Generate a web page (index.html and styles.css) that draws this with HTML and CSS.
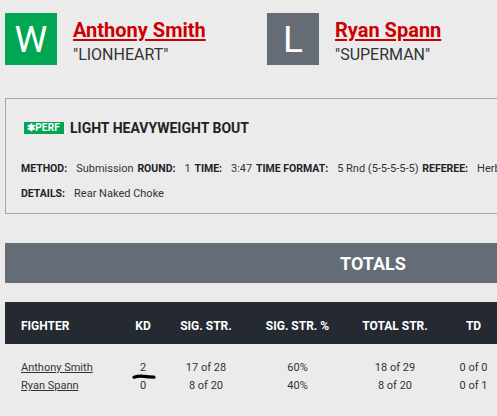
FILE: index.html
```html
<!DOCTYPE html>
<html>
<head>
<meta charset="utf-8">
<link rel="stylesheet" href="styles.css">
</head>
<body>
<div class="page">
  <div class="fighters">
    <div class="fighter">
      <div class="result win">W</div>
      <div class="info">
        <a class="name" href="#">Anthony Smith</a>
        <div class="nick">"LIONHEART"</div>
      </div>
    </div>
    <div class="fighter">
      <div class="result loss">L</div>
      <div class="info">
        <a class="name" href="#">Ryan Spann</a>
        <div class="nick">"SUPERMAN"</div>
      </div>
    </div>
  </div>

  <div class="bout">
    <div class="bout-title"><span class="perf">&#x2731;PERF</span><span class="title">LIGHT HEAVYWEIGHT BOUT</span></div>
    <div class="meta">
      <span class="lbl">METHOD:</span><span class="val">Submission</span>
      <span class="lbl">ROUND:</span><span class="val">1</span>
      <span class="lbl">TIME:</span><span class="val">3:47</span>
      <span class="lbl">TIME FORMAT:</span><span class="val">5 Rnd (5-5-5-5-5)</span>
      <span class="lbl">REFEREE:</span><span class="val">Herb Dean</span>
    </div>
    <div class="meta details">
      <span class="lbl">DETAILS:</span><span class="val">Rear Naked Choke</span>
    </div>
  </div>

  <div class="totals">TOTALS</div>

  <table class="stats">
    <colgroup>
      <col class="c-fighter"><col class="c-kd"><col class="c-sig"><col class="c-pct"><col class="c-tot"><col class="c-td"><col class="c-tdp">
    </colgroup>
    <thead>
      <tr><th class="left">FIGHTER</th><th>KD</th><th>SIG. STR.</th><th>SIG. STR. %</th><th>TOTAL STR.</th><th>TD</th><th>TD %</th></tr>
    </thead>
    <tbody>
      <tr class="first"><td class="left"><a href="#">Anthony Smith</a></td><td class="kd">2<svg class="mark" width="26" height="8" viewBox="0 0 26 8"><path d="M3 4.2 Q8 2.6 13 3.4 T23 4.2" fill="none" stroke="#000" stroke-width="3.2" stroke-linecap="round"/></svg></td><td>17 of 28</td><td>60%</td><td>18 of 29</td><td>0 of 0</td><td>---</td></tr>
      <tr><td class="left"><a href="#">Ryan Spann</a></td><td>0</td><td>8 of 20</td><td>40%</td><td>8 of 20</td><td>0 of 1</td><td>0%</td></tr>
    </tbody>
  </table>
</div>
</body>
</html>
```

FILE: styles.css
```css
html, body {
  margin: 0;
  padding: 0;
  overflow: hidden;
  background: #ebebeb;
}
body {
  font-family: Roboto, "Liberation Sans", sans-serif;
  color: #333;
}
.page {
  width: 736px;
  padding: 13px 0 0 5px;
}
.fighters {
  display: flex;
}
.fighter {
  display: flex;
  width: 262px;
}
.result {
  width: 52px;
  height: 52px;
  display: flex;
  align-items: center;
  justify-content: center;
  color: #fff;
  font-size: 37px;
  line-height: 1;
}
.win { background: #00a651; }
.loss { background: #656c75; }
.info {
  margin-left: 16px;
  padding-top: 4px;
  display: flex;
  flex-direction: column;
}
.name {
  color: #cc0000;
  font-size: 20px;
  font-weight: 700;
  line-height: 26px;
  text-decoration: underline;
  text-decoration-thickness: 2px;
  text-underline-offset: 2px;
}
.nick {
  margin-top: 3px;
  font-size: 16px;
  line-height: 18px;
  color: #333;
}
.bout {
  margin-top: 33px;
  border: 1px solid #a7a7a7;
  border-right: none;
  height: 116px;
  padding-left: 15px;
  box-sizing: border-box;
}
.bout-title {
  display: flex;
  align-items: center;
  margin-top: 22px;
  height: 13px;
}
.perf {
  background: #00a651;
  color: #fff;
  font-size: 10px;
  font-weight: 700;
  line-height: 12px;
  padding: 0 4px 0 3px;
  margin-left: 3px;
  letter-spacing: 0.2px;
}
.title {
  margin-left: 6px;
  font-size: 14px;
  font-weight: 700;
  color: #222;
}
.meta {
  margin-top: 29px;
  font-size: 11px;
  line-height: 12px;
  white-space: nowrap;
}
.meta.details {
  margin-top: 13px;
}
.lbl {
  font-weight: 700;
  font-size: 10.5px;
  color: #222;
  margin-left: 1px;
}
.lbl:first-child {
  margin-left: 0;
}
.val {
  margin-left: 9px;
  color: #333;
}
.totals {
  margin-top: 29px;
  height: 40px;
  background: #646c75;
  color: #fff;
  font-size: 18px;
  font-weight: 700;
  display: flex;
  align-items: center;
  justify-content: center;
}
.stats {
  margin-top: 19px;
  width: 736px;
  border-collapse: collapse;
  table-layout: fixed;
  font-size: 11px;
}
.c-fighter { width: 110px; }
.c-kd { width: 56px; }
.c-sig { width: 70px; }
.c-pct { width: 113px; }
.c-tot { width: 82px; }
.c-td { width: 75px; }
.stats thead tr {
  background: #252a32;
  height: 42px;
}
.stats th {
  color: #fff;
  font-size: 12px;
  font-weight: 700;
  text-align: center;
  padding: 6px 0 0;
  white-space: nowrap;
}
.stats td {
  text-align: center;
  padding: 0;
  line-height: 18px;
  color: #333;
  white-space: nowrap;
}
.stats tr.first td {
  padding-top: 15px;
}
.stats .left {
  text-align: left;
  padding-left: 16px;
}
.stats td a {
  color: #333;
  text-decoration: underline;
}
.kd {
  position: relative;
}
.mark {
  position: absolute;
  left: 16px;
  top: 29px;
}
```
